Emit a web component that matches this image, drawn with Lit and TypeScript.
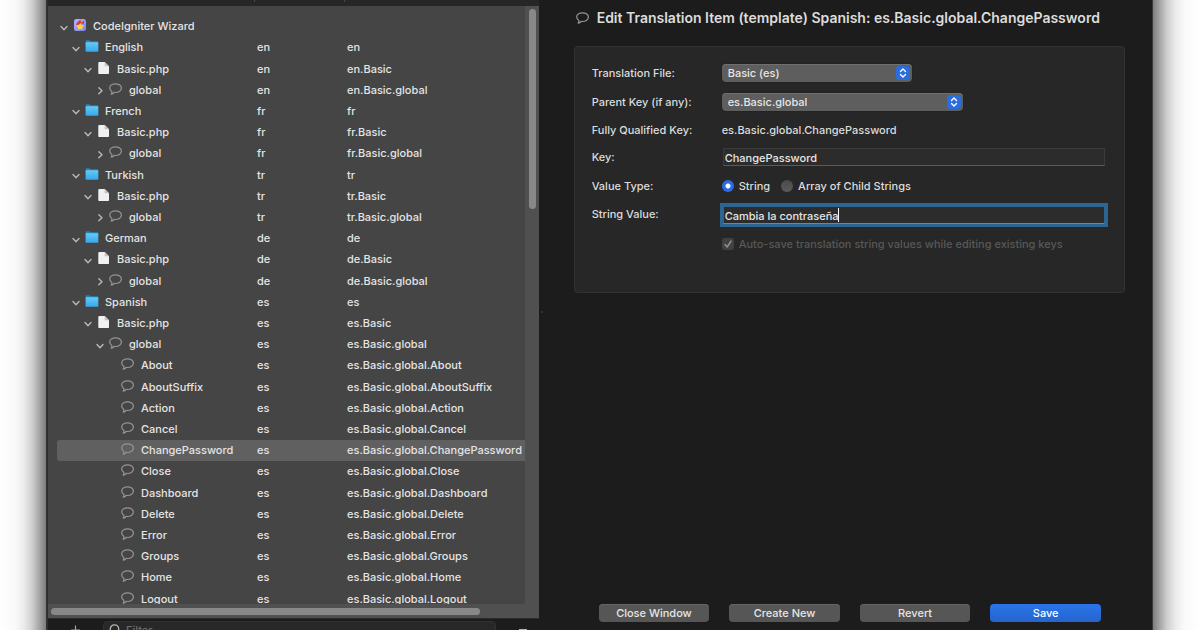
import { LitElement, html, css, svg, nothing } from "lit";
import { customElement, property } from "lit/decorators.js";
import { classMap } from "lit/directives/class-map.js";
import { styleMap } from "lit/directives/style-map.js";

type Kind = "app" | "folder" | "file" | "key";

interface TreeRow {
  name: string;
  kind: Kind;
  level: number;
  open?: boolean;
  lang?: string;
  path?: string;
  selected?: boolean;
}

const languages: [string, string][] = [
  ["English", "en"],
  ["French", "fr"],
  ["Turkish", "tr"],
  ["German", "de"],
  ["Spanish", "es"],
];

const spanishKeys = [
  "About", "AboutSuffix", "Action", "Cancel", "ChangePassword", "Close",
  "Dashboard", "Delete", "Error", "Groups", "Home", "Logout",
];

const rows: TreeRow[] = [
  { name: "CodeIgniter Wizard", kind: "app", level: 0, open: true },
  ...languages.flatMap(([name, lang]): TreeRow[] => [
    { name, kind: "folder", level: 1, open: true, lang, path: lang },
    { name: "Basic.php", kind: "file", level: 2, open: true, lang, path: `${lang}.Basic` },
    { name: "global", kind: "key", level: 3, open: lang === "es", lang, path: `${lang}.Basic.global` },
  ]),
  ...spanishKeys.map((name): TreeRow => ({
    name, kind: "key", level: 4, lang: "es", path: `es.Basic.global.${name}`,
    selected: name === "ChangePassword",
  })),
];

const icons = {
  app: svg`
    <defs>
      <linearGradient id="sq" x1="0" y1="0" x2="1" y2="1"><stop offset="0" stop-color="#b9b4ff"/><stop offset="1" stop-color="#7a84ee"/></linearGradient>
    </defs>
    <rect x="1" y="1" width="12" height="12" rx="2.5" fill="url(#sq)"/>
    <path d="M7.6 1.6C5.8 3.2 3.2 5 3.2 7.200L6.500 6.500 8 5.300 10.800 6.600C11 5.200 10.300 4.800 11.600 2.600 10 3.200 9.200 3.900 8.700 5 8 4.200 7.400 3.300 7.600 1.600z" fill="#e5322a"/>
    <path d="M7.200 5L8.300 7.100 11 7.600 9.200 9.400 9.500 11.600 7.200 10.700 4.800 11.600 5.100 9.400 3.200 7.600 6 7.100z" fill="#ffdc3c"/>`,
  folder: svg`
    <defs>
      <linearGradient id="fo" x1="0" y1="0" x2="0" y2="1"><stop offset="0" stop-color="#63cbf8"/><stop offset="1" stop-color="#38a6e8"/></linearGradient>
    </defs>
    <path d="M.6 2.2Q.6 1.3 1.500 1.300H4.600L5.600 2.300H12.600Q13.300 2.300 13.300 3V5H.6z" fill="#2187bd"/>
    <rect x=".6" y="3.300" width="12.700" height="9.500" rx=".8" fill="url(#fo)"/>`,
  file: svg`
    <path d="M2.300 1H7.700L12 5.300V12.200Q12 13 11.200 13H2.100Q1.300 13 1.300 12.200V2Q1.300 1 2.300 1z" fill="#f1f1f1"/>
    <path d="M7.700 1V5.300H12z" fill="#c4c4c4"/>`,
  key: svg`
    <path d="M2.900 9.400C1.600 8.600.7 7.500.7 6.100.7 3.700 3.200 1.800 6.500 1.800s5.900 1.900 5.900 4.300-2.600 4.400-5.900 4.400c-.5 0-.9 0-1.300-.1C4.500 11.400 3.500 12 2.200 12.100c.6-.8.900-1.700.7-2.700z" fill="none" stroke="currentColor" stroke-width="1.200" stroke-linejoin="round"/>`,
};

@customElement("ui-icon")
class UiIcon extends LitElement {
  @property() kind: Kind = "key";
  static styles = css`
    :host { display: block; flex: none; width: 14px; height: 14px; color: #949494; }
    svg { display: block; width: 100%; height: 100%; }
  `;
  render() {
    return html`<svg viewBox="0 0 14 14" aria-hidden="true">${icons[this.kind]}</svg>`;
  }
}

@customElement("translation-tree")
class TranslationTree extends LitElement {
  static styles = css`
    :host { display: flex; flex-direction: column; min-width: 0; height: 100%; background: #1c1c1c; color: #e4e4e4; }
    .head { flex: none; height: 6px; display: grid; grid-template-columns: 207px 90px 1fr; background: #262626; }
    .head span { height: 2px; border-right: 1px solid #484848; }
    .head span:last-child { border: 0; }
    .body {
      flex: 1; min-height: 0; display: grid; overflow: hidden;
      grid-template-columns: minmax(0, 1fr) 14px; grid-template-rows: minmax(0, 1fr) 14px;
      background: #505050;
    }
    .view { background: #454545; padding: 10px 0 0 9px; overflow: hidden; }
    table { width: 100%; height: calc(100% + 6px); border-collapse: separate; border-spacing: 0; table-layout: fixed; }
    .c1 { width: 200px; }
    .c2 { width: 90px; }
    td { padding: 0; white-space: nowrap; line-height: 15px; }
    .selected td { background: #606060; }
    .selected td:first-child { border-radius: 3px 0 0 3px; }
    .cell { display: flex; align-items: center; }
    .twist {
      flex: none; width: 10px; height: 10px; margin: 2px 4px 0 2px; padding: 0;
      border: 0; background: none; color: #b8b8b8;
    }
    .twist svg { display: block; }
    .twist.hidden { visibility: hidden; }
    .cell ui-icon { margin: 0 6px 3px 0; }
    .vbar { padding: 3px 3px 0 4px; }
    .hbar { padding: 4px 0 0 3px; grid-column: 1 / -1; }
    .vthumb { width: 7px; height: 200px; border-radius: 4px; background: #888; }
    .hthumb { width: 88%; height: 7px; border-radius: 4px; background: #888; }
    .foot { flex: none; height: 12px; overflow: hidden; display: flex; align-items: flex-start; border-top: 1px solid #2b2b2b; box-sizing: border-box; }
    .add { width: 20px; height: 16px; margin: 0 18px 0 17px; padding: 0; border: 0; background: none; color: #a0a0a0; }
    .add svg, .more svg { display: block; }
    .more { width: 14px; height: 16px; margin: 0 9px 0 20px; padding: 0; border: 0; background: none; color: #b0b0b0; }
    .filter {
      flex: 1; min-width: 0; display: flex; align-items: center; gap: 5px; height: 18px; margin-top: 2px; padding: 0 5px;
      box-sizing: border-box; background: #282828; border: 1px solid #303030; border-radius: 4px; color: #b4b4b4;
    }
    .filter input { flex: 1; min-width: 0; padding: 0; border: 0; outline: 0; background: none; color: inherit; font: inherit; }
    .filter input::placeholder { color: #6c6c6c; opacity: 1; }
  `;

  private row(r: TreeRow) {
    const branch = r.open !== undefined && r.level < 4;
    return html`<tr class=${classMap({ selected: !!r.selected })} aria-selected=${r.selected ? "true" : "false"}>
      <td>
        <div class="cell" style=${styleMap({ paddingLeft: `${r.level * 12}px` })}>
          <button class=${classMap({ twist: true, hidden: !branch })} aria-label=${r.open ? "Collapse" : "Expand"}>
            <svg width="10" height="10" viewBox="0 0 10 10" fill="none" stroke="currentColor" stroke-width="1.4" stroke-linecap="round" stroke-linejoin="round">
              <path d=${r.open ? "M2 3.5L5 6.7L8 3.5" : "M3.8 1.7L7 4.7L3.8 7.7"}></path>
            </svg>
          </button>
          <ui-icon .kind=${r.kind}></ui-icon><span>${r.name}</span>
        </div>
      </td>
      <td>${r.lang ?? nothing}</td>
      <td>${r.path ?? nothing}</td>
    </tr>`;
  }

  render() {
    return html`
      <div class="head"><span></span><span></span><span></span></div>
      <div class="body">
        <div class="view">
          <table>
            <colgroup><col class="c1" /><col class="c2" /><col /></colgroup>
            <tbody>${rows.map((r) => this.row(r))}</tbody>
          </table>
        </div>
        <div class="vbar"><div class="vthumb"></div></div>
        <div class="hbar"><div class="hthumb"></div></div>
      </div>
      <div class="foot">
        <button class="add" aria-label="Add">
          <svg width="20" height="16" viewBox="0 0 20 16" stroke="currentColor" stroke-width="1.2"><path d="M6 11H15M10.5 6.5V15.5"></path></svg>
        </button>
        <label class="filter">
          <svg width="12" height="12" viewBox="0 0 12 12" fill="none" stroke="currentColor" stroke-width="1.3"><circle cx="5.5" cy="5" r="4.2"></circle><path d="M8.5 8L11.5 11"></path></svg>
          <input type="text" placeholder="Filter" aria-label="Filter" />
        </label>
        <button class="more" aria-label="Options">
          <svg width="14" height="16" viewBox="0 0 14 16" stroke="currentColor" stroke-width="1.5"><path d="M3 10.7H11"></path></svg>
        </button>
      </div>`;
  }
}

@customElement("item-editor")
class ItemEditor extends LitElement {
  static styles = css`
    :host { position: relative; display: flex; flex-direction: column; min-width: 0; height: 100%; background: #1c1c1c; color: #dcdcdc; }
    .splitter { position: absolute; left: 2px; top: 50%; width: 2px; height: 2px; margin-top: -4px; border-radius: 50%; background: #3c3c3c; }
    header { display: flex; align-items: center; gap: 7px; padding: 7px 27px 0 37px; }
    h1 { margin: 0; font-size: 14px; line-height: 22px; font-weight: 600; white-space: nowrap; }
    .panel {
      display: grid; grid-template-columns: 130px minmax(0, 1fr);
      grid-template-rows: 28px 30px 26px 28px 30px 28px 30px;
      align-items: center; margin: 17px 27px 0 35px; padding: 12px 19px 33px 17px;
      background: #272727; border: 1px solid #333; border-radius: 4px;
    }
    .raised { padding-bottom: 2px; }
    .pick { display: grid; align-items: center; justify-self: start; }
    .pick > * { grid-area: 1 / 1; }
    .file { width: 190px; }
    .parent { width: 241px; }
    select {
      appearance: none; width: 100%; height: 18px; padding: 0 20px 0 6px; border: 0; border-radius: 4px;
      background: #5e5e5e; box-shadow: inset 0 1px 0 #707070, 0 0 1px #000; color: #e6e6e6; font: inherit; line-height: 18px;
    }
    .knob { justify-self: end; margin-right: 1px; pointer-events: none; }
    .text {
      width: 100%; height: 18px; box-sizing: border-box; padding: 2px 1px 0; font: inherit; color: #e6e6e6;
      background: #2c2c2c; border: 1px solid #3b3b3b; border-bottom-color: #5a5a5a; border-radius: 0; outline: 0;
    }
    .entry { position: relative; display: flex; margin-left: 1px; }
    .active { border-color: #2c6594; border-bottom-color: #4c8fc0; box-shadow: 0 0 0 3px #2c6594; }
    .caret { position: absolute; left: 115px; top: 2px; width: 1px; height: 14px; background: #fff; }
    .choices { display: flex; align-items: center; gap: 11px; }
    .choice { display: flex; align-items: center; gap: 5px; }
    .choice input { appearance: none; flex: none; width: 12px; height: 12px; margin: 0; }
    .choice input[type="radio"] { border-radius: 50%; background: linear-gradient(#4a4a4a, #5c5c5c); }
    .choice input[type="radio"]:checked { background: radial-gradient(circle, #fff 0 2px, #2a6be0 3px); }
    .mark { display: grid; }
    .mark > * { grid-area: 1 / 1; }
    .mark input { border-radius: 3px; background: #414141; }
    .muted { color: #585858; grid-column: 2; }
    footer { display: grid; grid-template-columns: repeat(4, minmax(0, 1fr)); gap: 20px; margin-top: auto; padding: 0 51px 8px 60px; }
    footer button {
      height: 18px; padding: 0; border: 0; border-radius: 4px; background: #565656; color: #e6e6e6; font: inherit;
      line-height: 18px; box-shadow: inset 0 1px 0 #646464;
    }
    footer .primary { background: linear-gradient(#2b74e8, #2464cf); box-shadow: none; color: #fff; }
  `;

  private knob() {
    return html`<svg class="knob" width="16" height="16" viewBox="0 0 16 16" fill="none" aria-hidden="true">
      <rect x="1" y="1" width="14" height="14" rx="3" fill="#2a6ddf"></rect>
      <path d="M5.5 6.4L8 3.9L10.5 6.4M5.5 9.6L8 12.1L10.5 9.6" stroke="#fff" stroke-width="1.4" stroke-linecap="round" stroke-linejoin="round"></path>
    </svg>`;
  }

  render() {
    return html`
      <div class="splitter"></div>
      <header>
        <ui-icon kind="key"></ui-icon>
        <h1>Edit Translation Item (template) Spanish: es.Basic.global.ChangePassword</h1>
      </header>
      <div class="panel">
        <label for="file">Translation File:</label>
        <div class="pick file"><select id="file"><option>Basic (es)</option></select>${this.knob()}</div>
        <label for="parent">Parent Key (if any):</label>
        <div class="pick parent"><select id="parent"><option>es.Basic.global</option></select>${this.knob()}</div>
        <span>Fully Qualified Key:</span>
        <span>es.Basic.global.ChangePassword</span>
        <label for="key">Key:</label>
        <div class="entry"><input class="text" id="key" type="text" .value=${"ChangePassword"} /></div>
        <span id="type">Value Type:</span>
        <div class="choices" role="radiogroup" aria-labelledby="type">
          <label class="choice"><input type="radio" name="type" checked />String</label>
          <label class="choice"><input type="radio" name="type" />Array of Child Strings</label>
        </div>
        <label class="raised" for="value">String Value:</label>
        <div class="entry">
          <input class="text active" id="value" type="text" .value=${"Cambia la contraseña"} />
          <span class="caret"></span>
        </div>
        <label class="choice muted">
          <span class="mark">
            <input type="checkbox" checked disabled />
            <svg width="12" height="12" viewBox="0 0 12 12" fill="none" stroke="#8c8c8c" stroke-width="1.6" stroke-linecap="round" stroke-linejoin="round"><path d="M3 6.5L5.2 9L9 3.2"></path></svg>
          </span>
          Auto-save translation string values while editing existing keys
        </label>
      </div>
      <footer>
        <button>Close Window</button>
        <button>Create New</button>
        <button>Revert</button>
        <button class="primary">Save</button>
      </footer>`;
  }
}

@customElement("app-root")
class AppRoot extends LitElement {
  static styles = css`
    :host {
      display: block; box-sizing: border-box; height: 100vh; padding: 0 47px 0 46px; overflow: hidden;
      font: 500 11px/15px Inter, "Liberation Sans", sans-serif;
      background:
        linear-gradient(to left, #7d7d7d, #a4a4a4 14%, #cfcfcf 30%, #ebebeb 48%, #f9f9f9 66%, #fff) left / 46px 100% no-repeat,
        linear-gradient(to right, #7d7d7d, #a4a4a4 14%, #cfcfcf 30%, #ebebeb 48%, #f9f9f9 66%, #fff) right / 47px 100% no-repeat,
        #fff;
    }
    .window {
      display: grid; grid-template-columns: minmax(0, 4fr) minmax(0, 5fr); height: 100%; box-sizing: border-box;
      border-left: 2px solid #303030; border-right: 1px solid #3a3a3a; background: #1c1c1c;
    }
  `;
  render() {
    return html`<main class="window"><translation-tree></translation-tree><item-editor></item-editor></main>`;
  }
}
